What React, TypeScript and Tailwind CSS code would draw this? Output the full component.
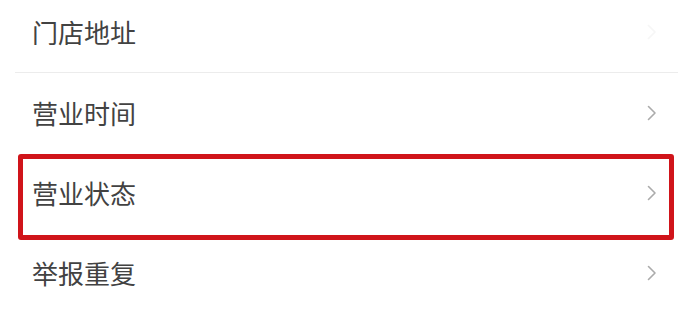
import React from 'react';

const rows = ['门店地址', '营业时间', '营业状态', '举报重复'];

const Chevron: React.FC<{ faint?: boolean }> = ({ faint }) => (
  <svg
    width="10"
    height="16"
    viewBox="0 0 10 16"
    fill="none"
    className={faint ? 'opacity-10' : ''}
  >
    <path d="M1.5 1.5 L8 8 L1.5 14.5" stroke="#ababab" strokeWidth="1.6" strokeLinecap="round" strokeLinejoin="round" />
  </svg>
);

export default function App() {
  return (
    <div className="w-[678px] h-[315px] overflow-hidden bg-white font-['Noto_Sans_CJK_SC','Noto_Sans',sans-serif]">
      <div className="-mt-2">
        {rows.map((label, i) => (
          <div key={label} className="relative">
            <div className="h-20 flex items-center justify-between pl-8 pr-[21px]">
              <span className="text-[26px] text-[#424242] leading-none">{label}</span>
              <Chevron faint={i === 0} />
            </div>
            {i === 0 && <div className="ml-[15px] h-px bg-[#ececec]" />}
            {i === 2 && (
              <div className="absolute left-[18px] right-[4px] top-px h-[86px] border-[5px] border-[#d0141a] rounded-[3px]" />
            )}
          </div>
        ))}
      </div>
    </div>
  );
}
